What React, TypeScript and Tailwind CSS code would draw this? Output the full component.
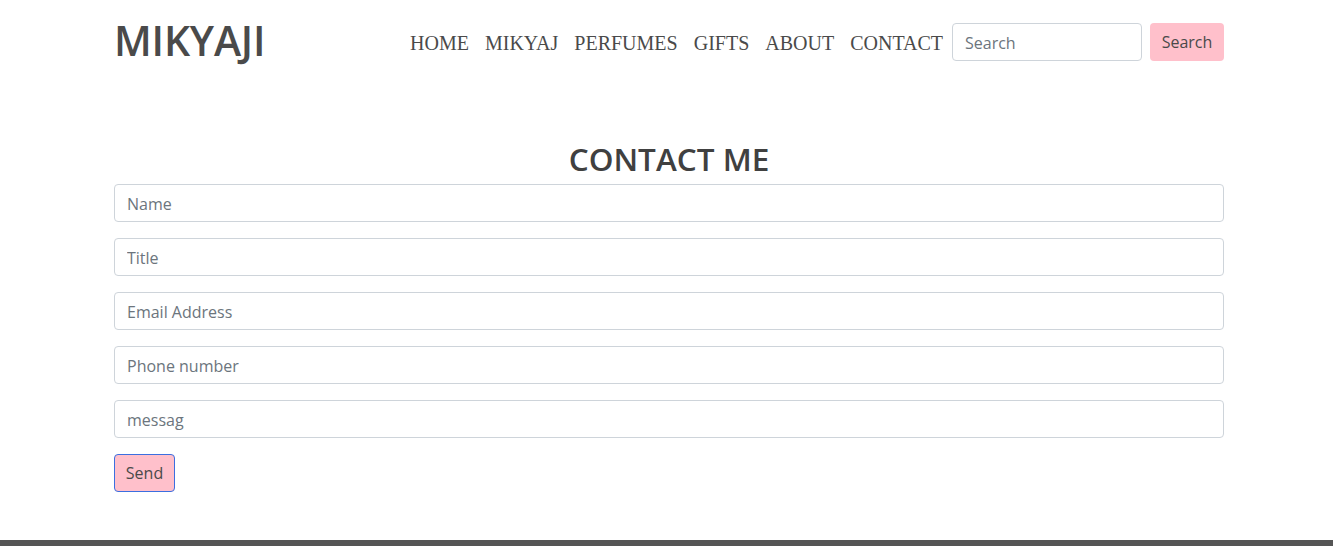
import React from "react";

export default function App() {
  const fields = ["Name", "Title", "Email Address", "Phone number", "messag"];
  const links = ["HOME", "MIKYAJ", "PERFUMES", "GIFTS", "ABOUT", "CONTACT"];
  return (
    <div className="min-h-[546px] w-full bg-white flex flex-col" style={{ fontFamily: '"Open Sans", "Noto Sans", sans-serif' }}>
      <div className="w-[1110px] ml-[114px] flex-1">
        <nav className="flex items-center justify-between h-[83px] pt-[1px]">
          <a className="text-[41px] leading-none font-semibold text-[#4a4a4a] tracking-[-0.2px] -mt-[3px]">MIKYAJI</a>
          <div className="flex items-center">
            <ul className="flex items-center mr-[1px] mt-[2px]" style={{ fontFamily: '"Liberation Serif", serif' }}>
              {links.map((l) => (
                <li key={l} className="px-[8px] text-[20px] text-[#4a4a4a] leading-none">{l}</li>
              ))}
            </ul>
            <input
              placeholder="Search"
              className="w-[190px] h-[38px] border border-[#ced4da] rounded-[4px] px-[12px] pt-[2px] text-[16px] placeholder:text-[#6c757d] mr-[8px]"
            />
            <button className="h-[38px] w-[74px] bg-[#ffc0cb] rounded-[4px] text-[16px] text-[#4a4a4a]">Search</button>
          </div>
        </nav>
        <h1 className="text-center text-[31.5px] font-semibold text-[#404040] leading-[38px] mt-[57px] mb-[6px]">CONTACT ME</h1>
        <form className="flex flex-col gap-[16px]">
          {fields.map((f) => (
            <input
              key={f}
              placeholder={f}
              className="w-full h-[38px] border border-[#ced4da] rounded-[4px] px-[12px] pt-[2px] text-[16px] placeholder:text-[#6c757d]"
            />
          ))}
          <div>
            <button type="button" className="h-[38px] w-[61px] bg-[#ffc0cb] border border-[#3b6fe0] rounded-[4px] text-[16px] text-[#4a4a4a]">Send</button>
          </div>
        </form>
      </div>
      <div className="h-[6px] bg-[#555555] mt-[47px]"></div>
    </div>
  );
}
